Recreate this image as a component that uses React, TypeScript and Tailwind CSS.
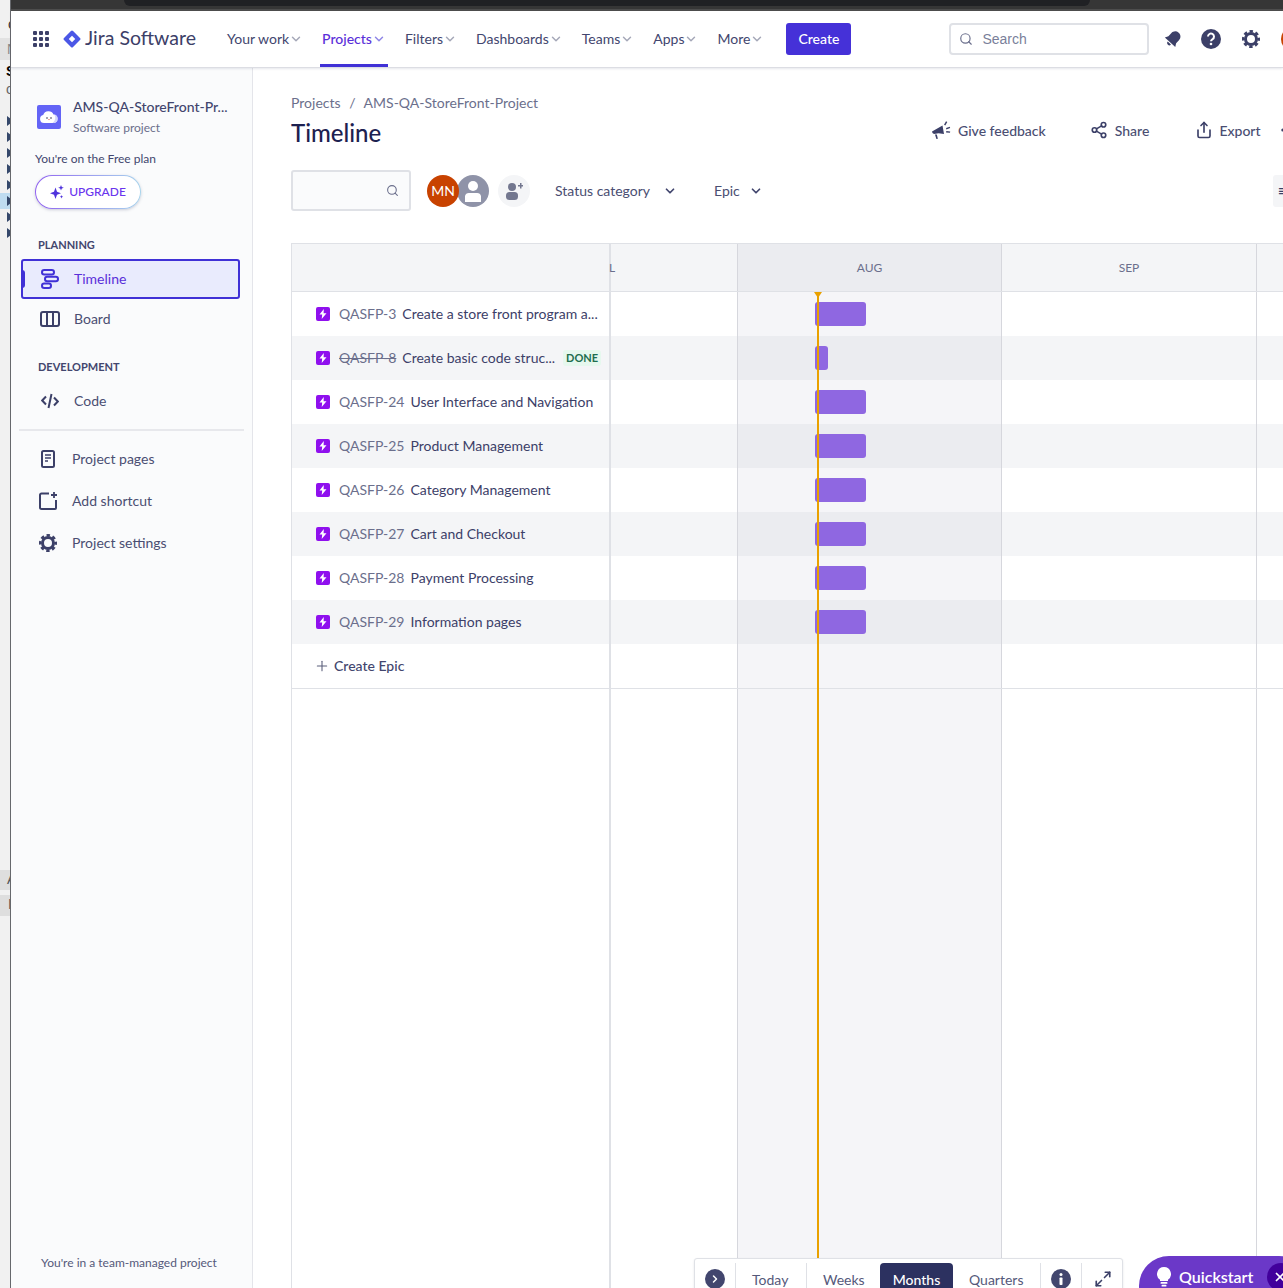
import React from 'react';
import { ChevronDown, ChevronRight, Plus, Search, Share2, Share, Maximize2, X, Ellipsis } from 'lucide-react';

const navItems = ['Your work', 'Projects', 'Filters', 'Dashboards', 'Teams', 'Apps', 'More'];

const epics = [
  { key: 'QASFP-3', title: 'Create a store front program a...', short: false },
  { key: 'QASFP-8', title: 'Create basic code struc...', short: true, done: true },
  { key: 'QASFP-24', title: 'User Interface and Navigation', short: false },
  { key: 'QASFP-25', title: 'Product Management', short: false },
  { key: 'QASFP-26', title: 'Category Management', short: false },
  { key: 'QASFP-27', title: 'Cart and Checkout', short: false },
  { key: 'QASFP-28', title: 'Payment Processing', short: false },
  { key: 'QASFP-29', title: 'Information pages', short: false },
];

function GridIcon() {
  return (
    <svg width="16" height="16" viewBox="0 0 16 16" fill="#3c4068" className="shrink-0">
      {[0, 6, 12].map((x) =>
        [0, 6, 12].map((y) => <rect key={`${x}-${y}`} x={x} y={y} width="4" height="4" rx="1" />)
      )}
    </svg>
  );
}

function JiraLogo() {
  return (
    <svg width="18" height="18" viewBox="0 0 18 18">
      <rect x="2.6" y="2.6" width="12.8" height="12.8" rx="1.5" fill="#4b57e6" transform="rotate(45 9 9)" />
      <rect x="6.7" y="6.7" width="4.6" height="4.6" fill="#fff" transform="rotate(45 9 9)" />
    </svg>
  );
}

function BellIcon() {
  return (
    <svg width="20" height="20" viewBox="0 0 20 20" fill="#3c4068">
      <g transform="rotate(42 10 10)">
        <path d="M10 1.5c-3.2 0-5.2 2.4-5.2 5.4v4.2L3 14.4h14l-1.800-3.300V6.900c0-3-2-5.400-5.200-5.400z" />
        <path d="M7.800 15.500h4.400a2.200 2.200 0 0 1-4.400 0z" />
      </g>
    </svg>
  );
}

function HelpIcon() {
  return (
    <svg width="20" height="20" viewBox="0 0 20 20">
      <circle cx="10" cy="10" r="10" fill="#3c4068" />
      <path d="M7 7.600a3 3 0 1 1 4.600 2.500c-1 .6-1.600 1.100-1.600 2.200" fill="none" stroke="#fff" strokeWidth="2" />
      <circle cx="10" cy="15" r="1.300" fill="#fff" />
    </svg>
  );
}

function GearIcon({ size = 18 }: { size?: number }) {
  return (
    <svg width={size} height={size} viewBox="0 0 18 18" fill="none" stroke="#3c4068">
      <circle cx="9" cy="9" r="5.500" strokeWidth="3" />
      <circle cx="9" cy="9" r="7.700" strokeWidth="2.600" strokeDasharray="3.400 2.650" strokeDashoffset="1.700" />
    </svg>
  );
}

function Megaphone() {
  return (
    <svg width="20" height="20" viewBox="0 0 20 20" fill="#3c4068">
      <path d="M1 11.500 11.500 5.500l1.500 8.500-5.500-.8-4.500.9L1.500 13z" />
      <path d="M4 14.500h1.800l1.100 4.200-1.500.4z" />
      <path d="M13 4.800l2-3.600 1.300.7-2 3.600zM15 8l3.800-1.300.4 1.400-3.800 1.300zM15.300 11l3.900.4-.2 1.400-3.900-.4z" />
    </svg>
  );
}

function TimelineIcon() {
  return (
    <svg width="20" height="20" viewBox="0 0 20 20" fill="none" stroke="#4031d6" strokeWidth="2">
      <rect x="2" y="1" width="12" height="4.400" rx="2.200" />
      <rect x="5" y="7.800" width="13" height="4.400" rx="2.200" />
      <rect x="2" y="14.600" width="9" height="4.400" rx="2.200" />
    </svg>
  );
}

function BoardIcon() {
  return (
    <svg width="20" height="16" viewBox="0 0 20 16" fill="none" stroke="#3c4068" strokeWidth="2">
      <rect x="1" y="1" width="18" height="14" rx="2" />
      <path d="M7 1v14M13 1v14" />
    </svg>
  );
}

function CodeIcon() {
  return (
    <svg width="18" height="16" viewBox="0 0 18 16" fill="none" stroke="#3c4068" strokeWidth="2">
      <path d="M5 3.500 1.200 7.500 5 11.500M13 4.500l3.800 4-3.800 4M10.500 1 7.500 15" />
    </svg>
  );
}

function PageIcon() {
  return (
    <svg width="14" height="18" viewBox="0 0 14 18" fill="none" stroke="#3c4068" strokeWidth="2">
      <rect x="1" y="1" width="12" height="16" rx="1.500" />
      <path d="M4 5h6M4 8h6M4 11h3" strokeWidth="1.600" />
    </svg>
  );
}

function ShortcutIcon() {
  return (
    <svg width="18" height="18" viewBox="0 0 18 18" fill="none" stroke="#3c4068" strokeWidth="2">
      <path d="M10 1.500H2.500a1.500 1.500 0 0 0-1.500 1.500v12.500a1.500 1.500 0 0 0 1.500 1.500H16a1 1 0 0 0 1-1V8" />
      <path d="M15 0v6M12 3h6" strokeWidth="1.800" />
    </svg>
  );
}

function BulbIcon() {
  return (
    <svg width="14" height="20" viewBox="0 0 14 20" fill="#fff">
      <path d="M7 0a7 7 0 0 0-4 12.700V14h8v-1.300A7 7 0 0 0 7 0z" />
      <rect x="3.500" y="15" width="7" height="1.800" rx=".9" />
      <rect x="4.500" y="17.800" width="5" height="1.800" rx=".9" />
    </svg>
  );
}

function InfoIcon() {
  return (
    <svg width="20" height="20" viewBox="0 0 20 20">
      <circle cx="10" cy="10" r="10" fill="#42466e" />
      <circle cx="10" cy="5.500" r="1.500" fill="#fff" />
      <rect x="8.500" y="8.500" width="3" height="7.500" rx=".8" fill="#fff" />
    </svg>
  );
}

function ProjectAvatar() {
  return (
    <div className="w-6 h-6 rounded-[2px] bg-[#6364f6] flex items-center justify-center">
      <svg width="20" height="14" viewBox="0 0 20 14">
        <path d="M5 13a4 4 0 0 1-.8-7.900A5.500 5.500 0 0 1 14.500 4.500 4.300 4.300 0 0 1 15 13z" fill="#fff" />
        <path d="M15 13a4.300 4.300 0 0 0 .2-8.500c1.800 2.200 1.500 6-1.700 8.500z" fill="#d2d5fb" />
        <circle cx="8" cy="8" r=".8" fill="#33334d" />
        <circle cx="12" cy="8" r=".8" fill="#33334d" />
        <path d="M9.200 9h1.600l-.8 1.300z" fill="#e8543f" />
      </svg>
    </div>
  );
}

function Sparkle() {
  return (
    <svg width="14" height="14" viewBox="0 0 14 14" fill="#4f33dc">
      <path d="M5.500 2.500 7 6.800l4 1.400-4 1.500-1.500 4.300L4 9.700 0 8.200l4-1.400z" />
      <path d="M11 0l.8 2 2 .8-2 .8-.8 2-.8-2-2-.8 2-.8z" />
      <path d="M11.500 10l.5 1.200 1.200.5-1.200.5-.5 1.200-.5-1.200-1.200-.5 1.200-.5z" />
    </svg>
  );
}

function EpicIcon() {
  return (
    <div className="w-[14px] h-[14px] rounded-[2px] bg-[#8f10ee] flex items-center justify-center shrink-0">
      <svg width="8" height="10" viewBox="0 0 8 10" fill="#fff">
        <path d="M4.800 0 .5 5.600h2.700L2.700 10 7.500 4.200H4.600z" />
      </svg>
    </div>
  );
}

function SideItem({ icon, label, className }: { icon: React.ReactNode; label: string; className: string }) {
  return (
    <div className={`flex items-center text-[14px] text-[#4a4e72] ${className}`}>
      {icon}
      <span className="-mt-[2px]">{label}</span>
    </div>
  );
}

function Row({ list, bar, alt, className }: { list?: React.ReactNode; bar?: number; alt?: boolean; className?: string }) {
  const side = alt ? 'bg-[#f4f5f7]' : 'bg-white';
  return (
    <div className={`flex ${className ?? 'h-11'}`}>
      <div className={`w-[320px] shrink-0 border-l border-r-2 border-[#dfe1e6] flex items-center pl-6 ${side}`}>{list}</div>
      <div className={`w-[127px] shrink-0 border-r border-[#d6d7dd] ${side}`} />
      <div className={`w-[264px] shrink-0 border-r border-[#d6d7dd] flex items-center pl-[77px] ${alt ? 'bg-[#ebecf0]' : 'bg-[#f5f5f8]'}`}>
        {bar ? <div className="h-6 rounded-[3px] bg-[#8f67e1]" style={{ width: bar }} /> : null}
      </div>
      <div className={`w-[255px] shrink-0 border-r border-[#d6d7dd] ${side}`} />
      <div className={`flex-1 ${side}`} />
    </div>
  );
}

function MonthHeader() {
  const label = 'text-[12px] text-[#6b6f8c]';
  return (
    <div className="flex h-[49px] border-t border-b border-[#dfe1e6] bg-[#f4f5f7]">
      <div className="w-[320px] shrink-0 border-l border-r-2 border-[#dfe1e6]" />
      <div className={`w-[127px] shrink-0 border-r border-[#d6d7dd] flex items-center ${label}`}>
        <span className="-ml-[2px]">L</span>
      </div>
      <div className={`w-[264px] shrink-0 border-r border-[#d6d7dd] bg-[#ebecf0] flex items-center justify-center ${label}`}>AUG</div>
      <div className={`w-[255px] shrink-0 border-r border-[#d6d7dd] flex items-center justify-center ${label}`}>SEP</div>
      <div className="flex-1" />
    </div>
  );
}

function LeftEdge() {
  return (
    <div className="w-[10px] shrink-0 bg-[#f1f1f1] overflow-hidden flex flex-col text-[14px] leading-none font-['Liberation_Sans',sans-serif]">
      <div className="h-[38px] pt-[17px] pl-[8px] text-[#333]">c</div>
      <div className="h-[22px] bg-[#e2e2e2] pt-1 pl-[7px] text-[#888]">N</div>
      <div className="h-[22px] pt-1 pl-[6px] font-bold text-black">S</div>
      <div className="h-[31px] pl-[6px] text-[#666]">o</div>
      {[0, 1, 2, 3, 4, 5, 6, 7].map((i) => (
        <div key={i} className={`h-4 shrink-0 flex items-center pl-[7px] ${i === 5 ? 'bg-[#bfdcf0]' : ''}`}>
          <div className="w-0 h-0 border-y-[5px] border-y-transparent border-l-[7px] border-l-[#34476a]" />
        </div>
      ))}
      <div className="h-[629px] shrink-0" />
      <div className="h-[20px] shrink-0 bg-[#dedede] pl-[7px] pt-[2px] text-[#555]">A</div>
      <div className="h-[5px] shrink-0" />
      <div className="h-[21px] shrink-0 bg-[#dedede] pl-[8px] pt-[2px] text-[#555]">I</div>
    </div>
  );
}

export default function App() {
  return (
    <div className="w-[1283px] h-[1288px] overflow-hidden flex bg-white font-['Lato',sans-serif] text-[14px]">
      <LeftEdge />
      <div className="flex-1 min-w-0 flex flex-col border-l border-[#66686c] relative">
        {/* browser chrome behind the page */}
        <div className="h-[11px] shrink-0 bg-[#363636] flex pl-[113px] pr-[193px] border-b-2 border-[#4d4d4d]">
          <div className="flex-1 h-[6px] bg-[#202124] rounded-b-lg" />
        </div>
        <header className="h-[57px] shrink-0 bg-white border-b border-[#dcdde3] shadow-[0_1px_2px_rgba(60,64,104,0.12)] flex items-center pl-[22px] relative z-10 overflow-hidden whitespace-nowrap">
          <GridIcon />
          <div className="ml-[14px] shrink-0"><JiraLogo /></div>
          <span className="ml-[4px] text-[19.5px] text-[#3c4068] w-[112px] shrink-0 -mt-[2px]">Jira Software</span>
          <nav className="flex items-stretch h-full gap-[15px] ml-[28px] shrink-0">
            {navItems.map((item) => {
              const active = item === 'Projects';
              return (
                <div key={item} className={`flex items-center px-[2px] ${active ? 'border-b-[3px] border-[#4031d6] pt-[3px] text-[#5a2fd9] font-medium' : 'text-[#42466e]'}`}>
                  <span className="-mt-[2px]">{item}</span>
                  <ChevronDown size={14} strokeWidth={2.500} className={`shrink-0 ${active ? 'text-[#8f86e6]' : 'text-[#a5a8b8]'}`} />
                </div>
              );
            })}
          </nav>
          <button className="ml-[20px] w-[65px] h-8 pb-[2px] rounded-[3px] bg-[#4531d8] text-white font-medium shrink-0">Create</button>
          <div className="ml-[98px] w-[200px] h-[32px] border-2 border-[#dfe1e6] rounded-[4px] flex items-center pl-2 text-[#7a7f9a] font-['Liberation_Sans',sans-serif] shrink-0">
            <Search size={14} strokeWidth={2} className="text-[#6b6f8c]" />
            <span className="ml-[9px]">Search</span>
          </div>
          <div className="ml-[14px] shrink-0"><BellIcon /></div>
          <div className="ml-[18px] shrink-0"><HelpIcon /></div>
          <div className="ml-[21px] shrink-0"><GearIcon /></div>
          <div className="ml-[21px] w-6 h-6 rounded-full bg-[#c84200] shrink-0" />
        </header>

        <div className="flex-1 min-h-0 flex">
          <aside className="w-[242px] shrink-0 bg-[#fafbfc] border-r border-[#e4e5ea] flex flex-col text-[#42466e]">
            <div className="flex pl-[26px] pt-[37px] items-start">
              <ProjectAvatar />
              <div className="ml-3 -mt-[8px]">
                <div className="font-medium text-[14px] leading-5 text-[#42466e]">AMS-QA-StoreFront-Pr...</div>
                <div className="text-[12px] leading-4 mt-[3px] text-[#6b6f8c]">Software project</div>
              </div>
            </div>
            <div className="ml-6 mt-[15px] text-[12px] leading-4">You're on the Free plan</div>
            <div className="ml-6 mt-2 w-[106px] h-[34px] rounded-full p-px bg-gradient-to-r from-[#8f5ff0] to-[#a8d4ec] shadow-[0_1px_3px_rgba(60,64,104,0.25)]">
              <div className="w-full h-full rounded-full bg-white flex items-center justify-center gap-[5px] text-[12px] font-medium text-[#6a35ee]">
                <Sparkle />
                <span>UPGRADE</span>
              </div>
            </div>
            <div className="ml-[27px] mt-[28px] text-[11px] leading-4 font-bold text-[#42466e]">PLANNING</div>
            <div className="ml-[10px] mt-[6px] w-[219px] h-10 border-2 border-[#4031d6] rounded-[3px] bg-[#e9ebfd] flex items-center pl-[17px] text-[#5a2fd9] relative">
              <div className="absolute -left-[1px] top-[9px] w-[3px] h-[18px] bg-[#4031d6] rounded-r" />
              <TimelineIcon />
              <span className="ml-[14px] -mt-[2px]">Timeline</span>
            </div>
            <SideItem icon={<BoardIcon />} label="Board" className="h-10 pl-[29px] gap-[14px]" />
            <div className="ml-[27px] mt-[20px] text-[11px] leading-4 font-bold text-[#42466e]">DEVELOPMENT</div>
            <SideItem icon={<CodeIcon />} label="Code" className="h-10 mt-[6px] pl-[30px] gap-[15px]" />
            <div className="mx-2 mt-[8px] h-[2px] bg-[#e7e8ec]" />
            <SideItem icon={<PageIcon />} label="Project pages" className="h-[42px] mt-[7px] pl-[30px] gap-[17px]" />
            <SideItem icon={<ShortcutIcon />} label="Add shortcut" className="h-[42px] pl-[28px] gap-[15px]" />
            <SideItem icon={<GearIcon />} label="Project settings" className="h-[42px] pl-[28px] gap-[15px]" />
            <div className="mt-auto mb-[17px] text-[12px] leading-4 pl-[30px] text-[#55597a]">You're in a team-managed project</div>
          </aside>

          <main className="flex-1 min-w-0 flex flex-col overflow-hidden relative whitespace-nowrap">
            <div className="pl-[38px] pt-[25px] leading-5 text-[#6b6f8c]">
              Projects <span className="mx-[5px]">/</span> AMS-QA-StoreFront-Project
            </div>
            <div className="flex items-center pl-[38px] mt-[2px] h-9">
              <h1 className="text-[24px] font-medium text-[#1d2150] w-[640px] shrink-0">Timeline</h1>
              <div className="flex items-center text-[#4a4e72] font-medium -mt-[6px] shrink-0">
                <Megaphone />
                <span className="ml-[7px]">Give feedback</span>
                <Share2 size={18} strokeWidth={2.200} className="ml-[44px] text-[#3c4068] shrink-0" />
                <span className="ml-[7px]">Share</span>
                <Share size={18} strokeWidth={2.200} className="ml-[46px] text-[#3c4068] shrink-0" />
                <span className="ml-[6px]">Export</span>
                <Ellipsis size={18} className="ml-[18px] text-[#3c4068] shrink-0" />
              </div>
            </div>
            <div className="flex items-center pl-[38px] mt-[19px] h-[41px]">
              <div className="w-[120px] h-[41px] border-2 border-[#dfe1e6] rounded-[3px] bg-[#fafbfc] flex items-center justify-end pr-[10px] shrink-0">
                <Search size={13} strokeWidth={2} className="text-[#6b6f8c]" />
              </div>
              <div className="ml-4 w-8 h-8 rounded-full bg-[#c84200] text-white flex items-center justify-center text-[14px] relative z-10 shrink-0">MN</div>
              <div className="-ml-[2px] w-8 h-8 rounded-full bg-[#8f93a8] flex items-center justify-center shrink-0">
                <svg width="20" height="24" viewBox="0 0 20 24" fill="#fff">
                  <circle cx="10" cy="7" r="5" />
                  <path d="M2 17a4 4 0 0 1 4-3h8a4 4 0 0 1 4 3v6H2z" />
                </svg>
              </div>
              <div className="ml-[9px] w-8 h-8 rounded-full bg-[#f4f5f7] flex items-center justify-center shrink-0">
                <svg width="18" height="18" viewBox="0 0 18 18" fill="#73778f">
                  <circle cx="7" cy="5" r="4" />
                  <rect x="1" y="10" width="12" height="8" rx="3.500" />
                  <path d="M13 3h2V1h1.500v2h1.500v1.500h-1.500v2H15v-2h-2z" />
                </svg>
              </div>
              <span className="ml-[25px] w-[100px] shrink-0 text-[#4a4e72]">Status category</span>
              <ChevronDown size={14} strokeWidth={3} className="ml-[8px] text-[#42466e] shrink-0" />
              <span className="ml-[37px] w-[28px] shrink-0 text-[#4a4e72]">Epic</span>
              <ChevronDown size={14} strokeWidth={3} className="ml-[7px] text-[#42466e] shrink-0" />
              <div className="ml-[510px] w-10 h-8 rounded-[3px] bg-[#f4f5f7] shrink-0 pl-[5px] flex items-center text-[#3c4068] font-bold">≡</div>
            </div>

            <div className="flex-1 min-h-0 flex flex-col mt-8 ml-[38px] relative">
              <MonthHeader />
              {epics.map((e, i) => (
                <Row
                  key={e.key}
                  alt={i % 2 === 1}
                  bar={e.short ? 13 : 51}
                  list={
                    <div className="flex items-center">
                      <EpicIcon />
                      <span className={`ml-[9px] -mt-[2px] text-[#6b6f8c] ${e.done ? 'line-through' : ''}`}>{e.key}</span>
                      <span className="ml-[6px] -mt-[2px] text-[#3c4068]">{e.title}</span>
                      {e.done ? (
                        <span className="ml-[8px] px-[3px] rounded-[3px] bg-[#e6f8ee] text-[#216e4e] text-[11px] leading-4 font-bold">DONE</span>
                      ) : null}
                    </div>
                  }
                />
              ))}
              <Row
                className="h-[45px] border-b border-[#dfe1e6]"
                list={
                  <div className="flex items-center text-[#42466e] font-medium">
                    <Plus size={16} strokeWidth={1.600} className="-ml-[2px] text-[#5a5e7a]" />
                    <span className="ml-[4px] -mt-[2px]">Create Epic</span>
                  </div>
                }
              />
              <Row className="flex-1" />
              {/* today marker, drawn over the rows */}
              <div className="absolute left-[526px] top-[49px] bottom-[30px] w-[2px] bg-[#e9a100]" />
              <div className="absolute left-[523px] top-[49px] w-0 h-0 border-x-[4px] border-x-transparent border-t-[6px] border-t-[#e9a100]" />
            </div>

            {/* floating zoom controls */}
            <div className="absolute left-[441px] -bottom-6 w-[429px] h-[54px] bg-white border border-[#dfe1e6] rounded-t-[3px] flex items-start pt-[4px] text-[#55597a] shadow-[0_1px_2px_rgba(60,64,104,0.15)]">
              <div className="ml-[10px] mt-[6px] w-5 h-5 rounded-full bg-[#42466e] text-white flex items-center justify-center">
                <ChevronRight size={12} strokeWidth={3} />
              </div>
              <div className="ml-[10px] w-px h-7 bg-[#dfe1e6]" />
              <span className="ml-4 mt-[6px] w-[38px]">Today</span>
              <div className="ml-4 w-px h-7 bg-[#dfe1e6]" />
              <span className="ml-4 mt-[6px] w-[41px]">Weeks</span>
              <div className="ml-4 w-[73px] h-10 rounded-t-[4px] bg-[#2c3160] text-white font-medium flex justify-center pt-[6px]">Months</div>
              <span className="ml-4 mt-[6px] w-[56px]">Quarters</span>
              <div className="ml-[15px] w-px h-7 bg-[#dfe1e6]" />
              <div className="ml-[10px] mt-[6px]"><InfoIcon /></div>
              <div className="ml-[10px] w-px h-7 bg-[#dfe1e6]" />
              <Maximize2 size={18} strokeWidth={2.200} className="ml-[12px] mt-[7px] text-[#3c4068]" />
            </div>
            <div className="absolute left-[886px] -bottom-7 w-[170px] h-[60px] rounded-full bg-[#6b38c8] text-white flex items-start pt-[7px] pl-[18px]">
              <div className="mt-[4px]"><BulbIcon /></div>
              <span className="ml-[8px] text-[16px] font-semibold leading-7">Quickstart</span>
              <div className="ml-[14px] w-7 h-7 rounded-full bg-[#42009c] flex items-center pl-[6px] shrink-0">
                <X size={14} strokeWidth={3} />
              </div>
            </div>
          </main>
        </div>
      </div>
    </div>
  );
}
